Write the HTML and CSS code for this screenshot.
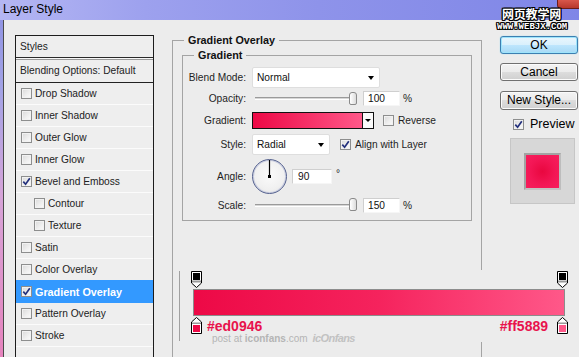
FILE: index.html
```html
<!DOCTYPE html>
<html>
<head>
<meta charset="utf-8">
<title>Layer Style</title>
<link rel="stylesheet" href="styles.css">
</head>
<body>
<div class="titlebar"><span class="title">Layer Style</span></div>
<div class="window">
  <div class="styles-panel">
    <div class="sp-head">Styles</div>
    <div class="sp-sep"></div>
    <div class="sp-blend">Blending Options: Default</div>
    <div class="sp-row"><span class="cb"></span><span class="sp-text">Drop Shadow</span></div>
    <div class="sp-row"><span class="cb"></span><span class="sp-text">Inner Shadow</span></div>
    <div class="sp-row"><span class="cb"></span><span class="sp-text">Outer Glow</span></div>
    <div class="sp-row"><span class="cb"></span><span class="sp-text">Inner Glow</span></div>
    <div class="sp-row"><span class="cb on"><svg viewBox="0 0 9 9" width="9" height="9"><path d="M1.3 4.6 L3.6 7.2 L7.8 1.2" fill="none" stroke="#23307c" stroke-width="1.7"/></svg></span><span class="sp-text">Bevel and Emboss</span></div>
    <div class="sp-row sub"><span class="cb"></span><span class="sp-text">Contour</span></div>
    <div class="sp-row sub"><span class="cb"></span><span class="sp-text">Texture</span></div>
    <div class="sp-row"><span class="cb"></span><span class="sp-text">Satin</span></div>
    <div class="sp-row"><span class="cb"></span><span class="sp-text">Color Overlay</span></div>
    <div class="sp-row active"><span class="cb on"><svg viewBox="0 0 9 9" width="9" height="9"><path d="M1.3 4.6 L3.6 7.2 L7.8 1.2" fill="none" stroke="#23307c" stroke-width="1.7"/></svg></span><span class="sp-text">Gradient Overlay</span></div>
    <div class="sp-row"><span class="cb"></span><span class="sp-text">Pattern Overlay</span></div>
    <div class="sp-row"><span class="cb"></span><span class="sp-text">Stroke</span></div>
  </div>

  <div class="main">
    <div class="group outer">
      <div class="legend">Gradient Overlay</div>
      <div class="group inner">
        <div class="legend">Gradient</div>

        <div class="frow r-blend">
          <div class="flabel">Blend Mode:</div>
          <div class="select sel-blend"><span class="sel-val">Normal</span><span class="tri"></span></div>
        </div>

        <div class="frow r-opacity">
          <div class="flabel">Opacity:</div>
          <div class="slider"><div class="track"></div><div class="thumb"></div></div>
          <div class="num">100</div>
          <div class="unit">%</div>
        </div>

        <div class="frow r-grad">
          <div class="flabel">Gradient:</div>
          <div class="gswatch"><div class="gfill"></div><div class="garrow"><span class="tri small"></span></div></div>
          <span class="cb cb-rev"></span><span class="cb-label">Reverse</span>
        </div>

        <div class="frow r-style">
          <div class="flabel">Style:</div>
          <div class="select sel-style"><span class="sel-val">Radial</span><span class="tri"></span></div>
          <span class="cb on cb-align"><svg viewBox="0 0 9 9" width="9" height="9"><path d="M1.3 4.6 L3.6 7.2 L7.8 1.2" fill="none" stroke="#23307c" stroke-width="1.7"/></svg></span><span class="cb-label">Align with Layer</span>
        </div>

        <div class="frow r-angle">
          <div class="flabel">Angle:</div>
          <div class="dial"><svg viewBox="0 0 35 35" width="35" height="35"><line x1="17.5" y1="0.5" x2="17.5" y2="17.5" stroke="#000" stroke-width="1.2"/><rect x="16" y="16" width="3" height="3" fill="#000"/></svg></div>
          <div class="num num-angle">90</div>
          <div class="deg">°</div>
        </div>

        <div class="frow r-scale">
          <div class="flabel">Scale:</div>
          <div class="slider"><div class="track"></div><div class="thumb"></div></div>
          <div class="num">150</div>
          <div class="unit">%</div>
        </div>
      </div>
    </div>
  </div>

  <div class="side">
    <div class="btn ok">OK</div>
    <div class="btn cancel">Cancel</div>
    <div class="btn newstyle">New Style...</div>
    <div class="preview-row"><span class="cb on"><svg viewBox="0 0 9 9" width="9" height="9"><path d="M1.3 4.6 L3.6 7.2 L7.8 1.2" fill="none" stroke="#23307c" stroke-width="1.7"/></svg></span><span class="preview-label">Preview</span></div>
    <div class="preview-box"><div class="preview-swatch"></div></div>
  </div>
</div>

<div class="closebtn"></div>
<div class="wm">
  <div class="wm-cn">网页教学网</div>
  <div class="wm-en">WWW.WEBJX.COM</div>
</div>

<div class="ge">
  <div class="ge-frame">
    <div class="stops-top">
      <svg class="stop" viewBox="0 0 11 17" width="11" height="17"><path d="M0.5 0.5 H10.5 V12 L5.5 16.5 L0.5 12 Z" fill="#fff" stroke="#000"/><rect x="2" y="2" width="7" height="7" fill="#000"/><rect x="1" y="9.5" width="9" height="2" fill="#9a9a9a"/></svg>
      <svg class="stop" viewBox="0 0 11 17" width="11" height="17"><path d="M0.5 0.5 H10.5 V12 L5.5 16.5 L0.5 12 Z" fill="#fff" stroke="#000"/><rect x="2" y="2" width="7" height="7" fill="#000"/><rect x="1" y="9.5" width="9" height="2" fill="#9a9a9a"/></svg>
    </div>
    <div class="gbar"></div>
    <div class="stops-bottom">
      <svg class="stop" viewBox="0 0 11 17" width="11" height="17"><path d="M5.5 0.5 L10.5 5 V16.5 H0.5 V5 Z" fill="#fff" stroke="#000"/><rect x="1" y="5.5" width="9" height="1.5" fill="#9a9a9a"/><rect x="2" y="8" width="7" height="7" fill="#ed0946"/></svg>
      <span class="hex hex-left">#ed0946</span>
      <span class="hex hex-right">#ff5889</span>
      <svg class="stop stop-r" viewBox="0 0 11 17" width="11" height="17"><path d="M5.5 0.5 L10.5 5 V16.5 H0.5 V5 Z" fill="#fff" stroke="#000"/><rect x="1" y="5.5" width="9" height="1.5" fill="#9a9a9a"/><rect x="2" y="8" width="7" height="7" fill="#ff5889"/></svg>
    </div>
    <div class="credit">post at <b>iconfans</b>.com<span class="logo">icOnfans</span></div>
  </div>
</div>
</body>
</html>
```

FILE: styles.css
```css
* { box-sizing: border-box; }
html, body { margin: 0; padding: 0; }
html { overflow: hidden; }
body {
  width: 579px;
  height: 357px;
  overflow: hidden;
  position: relative;
  font-family: "Liberation Sans", Arial, sans-serif;
  font-size: 10.2px;
  color: #1e1e1e;
  background: linear-gradient(180deg, #8c90e2 0%, #a3a3e6 25%, #d6a4d8 55%, #e683bd 100%);
}

/* title bar */
.titlebar {
  height: 20px;
  padding-left: 3px;
  font-size: 12px;
  line-height: 18px;
  color: #000;
  background: linear-gradient(90deg, #b4b6f3 0%, #9da1ee 25%, #8e93ea 55%, #7f86e7 100%);
}

/* window body */
.window {
  margin-left: 3px;
  height: 337px;
  border-left: 1px solid #4a4a4a;
  background: #ececec;
  display: flex;
  align-items: flex-start;
  overflow: hidden;
}

/* styles list */
.styles-panel {
  flex: none;
  margin: 15px 0 0 11px;
  width: 139px;
  height: 322px;
  border: 1px solid #1c1c1c;
  border-bottom: none;
  background: #eeeeee;
  color: #222;
}
.sp-head {
  height: 22px;
  line-height: 21px;
  padding-left: 4px;
  border-bottom: 1px solid #2a2a2a;
}
.sp-sep {
  height: 2px;
  background: #f7f7f7;
  border-bottom: 1px solid #9b9b9b;
}
.sp-blend {
  height: 23px;
  line-height: 22px;
  padding-left: 4px;
  border-bottom: 1px solid #222;
}
.sp-row {
  height: 22px;
  border-bottom: 1px solid #fbfbfb;
  display: flex;
  align-items: center;
  padding-left: 5px;
}
.sp-row.sub { padding-left: 18px; }
.sp-text { margin-left: 3px; }
.sp-row.active {
  background: #3399ff;
  border-bottom-color: #3399ff;
  box-shadow: 0 -1px 0 #3399ff;
  color: #fff;
  font-weight: bold;
  font-size: 10.8px;
}

/* checkbox */
.cb {
  flex: none;
  width: 11px;
  height: 11px;
  border: 1px solid #8d8e8e;
  background: linear-gradient(135deg, #d9d9d9 0%, #f0f0f0 60%, #fbfbfb 100%);
  box-shadow: inset 0 0 0 1px #f2f2f2;
  display: flex;
  align-items: center;
  justify-content: center;
}
.cb svg { display: block; }

/* main column */
.main {
  flex: none;
  margin: 20px 0 0 18px;
  width: 310px;
}
.group { border: 1px solid #a4a4a4; }
.outer { height: 317px; border-bottom: none; }
.legend {
  width: max-content;
  margin: -7px 0 0 11px;
  padding: 0 4px;
  line-height: 13px;
  font-weight: bold;
  font-size: 10.8px;
  color: #111;
  background: #ececec;
}
.inner {
  margin: 8px 9px 0 9px;
  padding-bottom: 7px;
}

.frow {
  display: flex;
  align-items: center;
}
.flabel {
  flex: none;
  width: 63px;
  margin-right: 6px;
  text-align: right;
}
.r-blend { margin-top: 5px; height: 21px; }
.r-opacity { margin-top: 2px; height: 16px; }
.r-grad { margin-top: 6px; height: 17px; }
.r-style { margin-top: 5px; height: 21px; }
.r-angle { margin-top: 4px; height: 35px; }
.r-scale { margin-top: 4px; height: 15px; }

.select {
  flex: none;
  height: 21px;
  background: #fff;
  border: 1px solid #dedede;
  border-radius: 2px;
  display: flex;
  align-items: center;
  padding: 0 5px 0 4px;
  color: #111;
}
.sel-blend { width: 128px; }
.sel-style { width: 78px; }
.sel-val { flex: 1; }
.tri {
  width: 0;
  height: 0;
  border-left: 3.5px solid transparent;
  border-right: 3.5px solid transparent;
  border-top: 4px solid #000;
}
.tri.small {
  border-left-width: 3px;
  border-right-width: 3px;
  border-top-width: 3px;
}

.slider {
  flex: none;
  width: 108px;
  height: 16px;
  position: relative;
}
.track {
  margin: 7px 0 0 3px;
  width: 100px;
  height: 3px;
  border-top: 1px solid #9a9a9a;
  border-bottom: 1px solid #ffffff;
  background: #d6d6d6;
}
.thumb {
  position: absolute;
  left: 97px;
  top: 2px;
  width: 8px;
  height: 13px;
  border: 1px solid #8a8a8a;
  border-radius: 3px 3px 2px 2px;
  background: linear-gradient(90deg, #ffffff, #dcdcdc);
}
.r-scale .thumb { top: 0; }
.r-scale .track { margin-top: 6px; }

.num {
  flex: none;
  width: 37px;
  height: 15px;
  margin-left: 3px;
  background: #fff;
  border: 1px solid;
  border-color: #cfcfcf #f6f6f6 #f6f6f6 #cfcfcf;
  padding-left: 4px;
  line-height: 13px;
  color: #111;
}
.unit { margin-left: 3px; }

.gswatch {
  flex: none;
  display: flex;
  width: 122px;
  height: 17px;
  border: 1px solid #111;
}
.gfill {
  flex: 1;
  background: linear-gradient(90deg, #ed0946, #ff5889);
  border-right: 1px solid #111;
}
.garrow {
  width: 10px;
  background: #fafafa;
  display: flex;
  align-items: center;
  justify-content: center;
}
.cb-rev { margin-left: 9px; }
.cb-align { margin-left: 10px; }
.cb-label { margin-left: 4px; }

.dial {
  flex: none;
  width: 35px;
  height: 35px;
  border-radius: 50%;
  border: 1.5px solid #55628f;
  background: radial-gradient(circle at 50% 45%, #fbfbfb 0%, #f0f0f0 60%, #dcdcdc 100%);
  box-shadow: inset 0 0 0 1px #c8cce0;
  overflow: hidden;
}
.dial svg { display: block; margin: -1.5px 0 0 -1.5px; }
.num-angle { width: 40px; margin-left: 5px; padding-left: 5px; }
.deg { align-self: flex-start; margin: 9px 0 0 4px; line-height: 12px; }

/* side column */
.side {
  flex: none;
  margin: 16px 0 0 18px;
  width: 78px;
  display: flex;
  flex-direction: column;
  align-items: flex-start;
  font-size: 12px;
  color: #000;
}
.btn {
  width: 78px;
  height: 18px;
  border: 1px solid #707070;
  border-radius: 3px;
  text-align: center;
  line-height: 16px;
  background: linear-gradient(#f3f3f3 0%, #ebebeb 50%, #dddddd 50%, #cfcfcf 100%);
  box-shadow: inset 0 0 0 1px #fbfbfb;
}
.btn.ok {
  border-color: #3c7fb1;
  background: linear-gradient(#eaf6fd 0%, #d9f0fc 50%, #bee6fd 50%, #a7d9f5 100%);
  box-shadow: inset 0 0 0 1px #9ee4fb, 0 0 1px #5fcff7;
}
.cancel { margin-top: 9px; }
.newstyle { margin-top: 10px; height: 19px; line-height: 17px; }
.preview-row {
  margin: 8px 0 0 13px;
  display: flex;
  align-items: center;
  height: 12px;
}
.preview-label { margin-left: 6px; font-size: 12.5px; line-height: 12px; }
.preview-box {
  margin: 8px 0 0 10px;
  width: 65px;
  height: 66px;
  background: #d7d7d7;
  border: 1px solid #c6c6c6;
  display: flex;
  align-items: center;
  justify-content: center;
}
.preview-swatch {
  width: 37px;
  height: 37px;
  border: 2px solid;
  border-color: #a3a3a3 #bdbdbd #c2c2c2 #a3a3a3;
  background: radial-gradient(circle, #e9073f 0%, #f31655 55%, #f81f5d 100%);
}

/* overlays */
.closebtn {
  position: absolute;
  left: 557px;
  top: 0;
  width: 22px;
  height: 9px;
  background: linear-gradient(#d8574b, #b7372c);
  border-left: 1px solid #6b1d1a;
  border-bottom: 1px solid #6b1d1a;
  border-bottom-left-radius: 4px;
}
.wm {
  position: absolute;
  left: 497px;
  top: 7px;
  color: #fff;
  text-shadow: 1px 0 0 #000, -1px 0 0 #000, 0 1px 0 #000, 0 -1px 0 #000, 1px 1px 0 #000, -1px -1px 0 #000, 1px -1px 0 #000, -1px 1px 0 #000;
}
.wm-cn {
  margin-left: 5px;
  font-family: "Noto Sans CJK SC", "Noto Sans CJK JP", sans-serif;
  font-weight: bold;
  font-size: 12px;
  line-height: 14px;
  letter-spacing: -0.2px;
}
.wm-en {
  margin-top: 2px;
  font-family: "Liberation Mono", monospace;
  font-weight: bold;
  font-size: 9px;
  line-height: 9px;
  letter-spacing: 0;
}

.ge {
  position: absolute;
  left: 178px;
  top: 270px;
  width: 401px;
  height: 72px;
  background: #ececec;
}
.ge-frame {
  margin: 1px 0 0 1px;
  height: 70px;
  border-left: 1px solid #a0a0a0;
  padding-left: 11px;
}
.stops-top {
  width: 377px;
  display: flex;
  justify-content: space-between;
  height: 17px;
}
.stop { display: block; flex: none; }
.gbar {
  margin: 1px 0 0 2px;
  width: 372px;
  height: 27px;
  border: 1px solid #8c8c8c;
  background: linear-gradient(90deg, #ed0946 0%, #f5235d 50%, #ff5889 100%);
}
.stops-bottom {
  margin-top: 1px;
  width: 377px;
  height: 17px;
  display: flex;
  align-items: flex-start;
}
.hex {
  margin-top: 2px;
  font-weight: bold;
  font-size: 14px;
  line-height: 14px;
  color: #e8134d;
}
.hex-left { margin-left: 5px; }
.hex-right { margin-left: auto; }
.stop-r { margin-left: 9px; }
.credit {
  margin: -1px 0 0 21px;
  font-size: 10px;
  line-height: 10px;
  color: #b5b5b5;
}
.logo {
  margin-left: 5px;
  font-style: italic;
  font-weight: bold;
  font-size: 11px;
  letter-spacing: -0.6px;
  color: #c2c2c2;
}
```
